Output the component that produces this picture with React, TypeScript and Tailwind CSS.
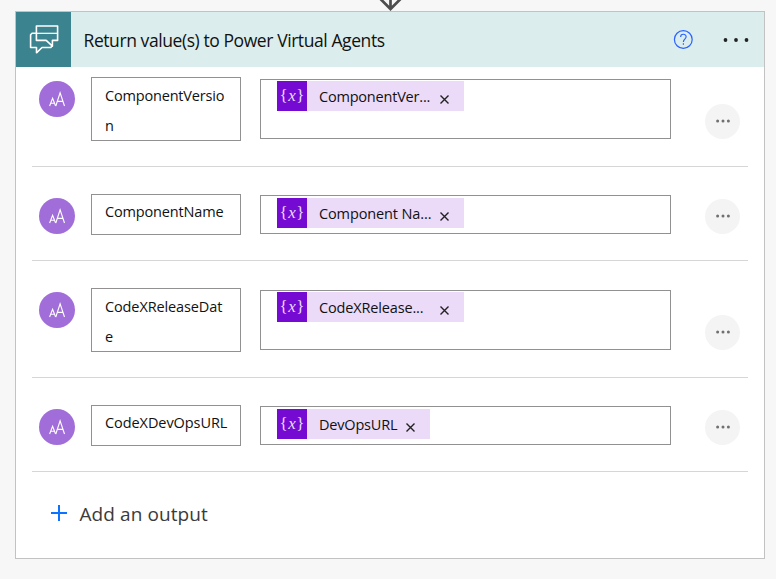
type Output = {
  name: string;
  token: string;
  tall: boolean;
  nameTracking: string;
  tokenTracking: string;
  tokenWidth: string;
};

const outputs: Output[] = [
  { name: "ComponentVersion", token: "ComponentVer...", tall: true, nameTracking: "tracking-[-0.18px]", tokenTracking: "tracking-[-0.2px]", tokenWidth: "w-[117px]" },
  { name: "ComponentName", token: "Component Na...", tall: false, nameTracking: "tracking-[-0.16px]", tokenTracking: "tracking-[-0.12px]", tokenWidth: "w-[117px]" },
  { name: "CodeXReleaseDate", token: "CodeXRelease...", tall: true, nameTracking: "tracking-[-0.12px]", tokenTracking: "tracking-[-0.15px]", tokenWidth: "w-[117px]" },
  { name: "CodeXDevOpsURL", token: "DevOpsURL", tall: false, nameTracking: "tracking-[-0.07px]", tokenTracking: "tracking-[-0.2px]", tokenWidth: "w-[83px]" },
];

function ChatIcon() {
  return (
    <svg width="31" height="31" viewBox="0 0 31 31" fill="none" stroke="#fff" strokeWidth="1.6" strokeLinejoin="round">
      <path d="M8.4 2H29.6V16.4H24.4V22.2L18.2 16.4H8.4Z" />
      <path d="M8.4 9.3H4L2.6 10.7V23.5H8.5V28.8L14 23.5H22.8L24 22" />
      <path d="M8.4 9.3H29.6" strokeWidth="1.2" />
    </svg>
  );
}

function TextTypeIcon() {
  return (
    <span className="mt-1 flex size-9 shrink-0 items-center justify-center rounded-full bg-[#a16dd9]">
      <svg width="18" height="18" viewBox="0 0 18 18" fill="none" stroke="#fff" strokeWidth="1.1">
        <path d="M1.6 16 4.6 8.2 7.6 16M2.6 13.2H6.6" />
        <path d="M7.8 16 12.1 2.8 16.5 16M9.2 11.4H15" />
      </svg>
    </span>
  );
}

function Dots({ className, r, gap }: { className: string; r: number; gap: number }) {
  return (
    <svg width="28" height="8" viewBox="-14 -4 28 8" className={className} fill="currentColor">
      <circle cx={-gap} r={r} />
      <circle r={r} />
      <circle cx={gap} r={r} />
    </svg>
  );
}

function Token({ item }: { item: Output }) {
  return (
    <span className="flex h-[30px] bg-[#ebdbf8]">
      <span className="flex w-[30px] justify-center bg-[#750bd2] font-['Liberation_Serif',serif] text-[17px] leading-[29px] text-[#eadcf8]">
        {"{"}<i className="px-[0.5px]">x</i>{"}"}
      </span>
      <span className={`${item.tokenWidth} ${item.tokenTracking} ml-3 whitespace-nowrap leading-[31px]`}>{item.token}</span>
      <svg width="9" height="9" viewBox="0 0 9 9" className="mr-[15px] ml-1 mt-[14px]" stroke="#222" strokeWidth="1.4">
        <path d="M.5.5 8.5 8.5M8.5.5.5 8.5" />
      </svg>
    </span>
  );
}

function OutputRow({ item, first }: { item: Output; first: boolean }) {
  return (
    <li
      className={`flex items-start border-b border-[#d6d6d6] pl-[7px] ${first ? "h-[100px] pt-[10px]" : item.tall ? "h-[117px] pt-[27px]" : "h-[94px] pt-[27px]"}`}
    >
      <TextTypeIcon />
      <div
        className={`ml-4 w-[150px] shrink-0 border border-[#919191] pl-[13px] pr-[13px] leading-[30px] break-all ${item.nameTracking} ${item.tall ? "h-16 pt-[3px]" : "h-[41px] pt-[2px] whitespace-nowrap"}`}
      >
        {item.name}
      </div>
      <div
        className={`ml-[19px] flex w-[411px] shrink-0 items-start border border-[#919191] pl-4 ${item.tall ? "mt-[2px] h-[60px] pt-px" : "mt-px h-[39px] pt-[2px]"}`}
      >
        <Token item={item} />
      </div>
      <button
        className={`ml-[34px] flex size-[35px] shrink-0 items-center justify-center rounded-full bg-[#f4f4f4] text-[#707070] ${item.tall ? "mt-[27px]" : "mt-[5px]"}`}
      >
        <Dots className="mb-px" r={1.5} gap={5.4} />
      </button>
    </li>
  );
}

export default function App() {
  return (
    <div className="h-[579px] w-[776px] overflow-hidden bg-[#f7f7f7] pl-[15px] font-['Open_Sans','Noto_Sans',sans-serif] text-[14.5px] text-[#111]">
      <div className="h-[11px] pl-[364px]">
        <svg width="24" height="11" viewBox="0 0 24 11" fill="none" stroke="#4d4d4d" strokeWidth="2.7">
          <path d="M11.5-2V9M1-1.5 11.5 9 22-1.5" />
        </svg>
      </div>
      <section className="h-[548px] w-[750px] border border-[#c2c2c2] bg-white">
        <header className="flex h-[55px] items-center bg-[#dbedec]">
          <span className="flex size-[55px] items-center justify-center bg-[#3b838e]">
            <ChatIcon />
          </span>
          <h1 className="ml-3 w-[590px] whitespace-nowrap pt-px pl-[0.5px] text-[17.5px] tracking-[-0.42px]">
            Return value(s) to Power Virtual Agents
          </h1>
          <svg width="20" height="20" viewBox="0 0 20 20" fill="none" stroke="#2b62ff" strokeWidth="1.2">
            <circle cx="10.3" cy="9.5" r="8.9" />
            <path d="M7.6 7C7.6 3.4 13.1 3.4 13.1 6.8 13.1 9.1 10.4 9.2 10.4 11.9M10.4 13.3V14.7" />
          </svg>
          <Dots className="ml-[29px] text-[#222]" r={1.9} gap={10.5} />
        </header>
        <ul className="ml-4 w-[716px]">
          {outputs.map((item, index) => (
            <OutputRow key={item.name} item={item} first={index === 0} />
          ))}
        </ul>
        <button className="flex h-[84px] items-center pl-[35px] text-[19px] tracking-[0.09px] text-[#3b3b3b]">
          <svg width="16" height="16" viewBox="0 0 16 16" className="mb-[2px]" stroke="#0b74ff" strokeWidth="2">
            <path d="M8 0V16M0 8H16" />
          </svg>
          <span className="ml-[12.5px]">Add an output</span>
        </button>
      </section>
    </div>
  );
}
